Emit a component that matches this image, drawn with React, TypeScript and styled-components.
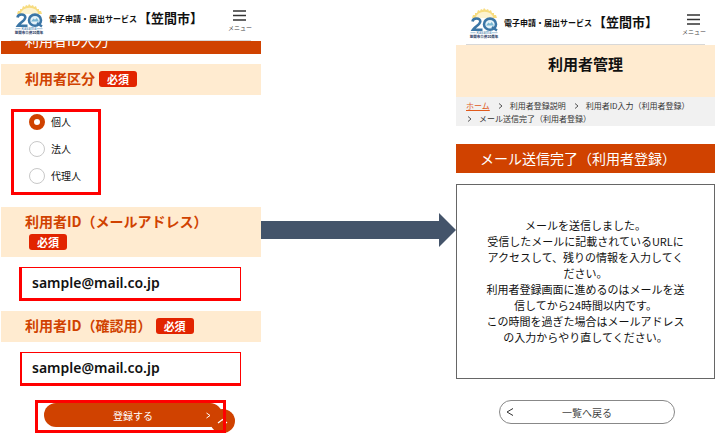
import React, { useState } from "react";
import styled, { createGlobalStyle } from "styled-components";

const ORANGE = "#d04200";
const CREAM = "#ffebd0";
const RED = "#ff0000";
const SLATE = "#44546a";

const GlobalStyle = createGlobalStyle`
  *, *::before, *::after { box-sizing: border-box; }
  body {
    margin: 0;
    background: #fff;
    color: #111;
    font-family: "Noto Sans CJK JP", "Noto Sans", sans-serif;
    font-size: 10px;
  }
  h1, h2, p, ol, fieldset { margin: 0; padding: 0; }
  button, input { font-family: inherit; }
`;

const Page = styled.main`
  display: grid;
  grid-template-columns: 260fr 195fr 259fr;
  align-items: start;
  padding: 0 1px;
`;

const Screen = styled.section`
  min-width: 0;
`;

const Header = styled.header<{ $top: number }>`
  display: flex;
  align-items: flex-start;
  padding: ${(p) => p.$top}px 9px 0 13px;
  height: ${(p) => p.$top + 37}px;
`;

const Brand = styled.div`
  display: flex;
  flex: 1;
  align-items: center;
  height: 32px;
  white-space: nowrap;
`;

const ServiceName = styled.span`
  margin-left: 5px;
  font-size: 8px;
  font-weight: 700;
  line-height: 32px;
`;

const CityName = styled.span`
  align-self: flex-start;
  margin-left: 1px;
  font-size: 13px;
  font-weight: 700;
  line-height: 30px;
`;

const MenuButton = styled.button`
  display: flex;
  flex-direction: column;
  align-items: center;
  gap: 2px;
  margin: 0;
  padding: 7px 0 0;
  border: 0;
  background: none;
  color: #444;
  font-size: 6px;
  line-height: 10px;
`;

const HeaderRule = styled.div`
  height: 1px;
  margin: 0 10px;
  background: #d8d8d8;
`;

const ClippedBar = styled.div`
  display: flex;
  align-items: flex-end;
  height: 13px;
  overflow: hidden;
  padding: 0 24px 6px;
  background: ${ORANGE};
  color: #fff;
  font-size: 14px;
  line-height: 16px;
`;

const FieldHeading = styled.div<{ $gap: number }>`
  display: flex;
  flex-wrap: wrap;
  align-items: center;
  margin-top: ${(p) => p.$gap}px;
  padding: 4px 24px 6px;
  background: ${CREAM};
  color: ${ORANGE};
  font-size: 14px;
  font-weight: 700;
  line-height: 21px;
`;

const Required = styled.span`
  margin: 2px 4px 1px;
  padding: 0 8px;
  border-radius: 3px;
  background: #e22400;
  color: #fff;
  font-size: 11px;
  line-height: 16px;
`;

const RadioGroup = styled.fieldset`
  display: flex;
  flex-direction: column;
  gap: 11px;
  width: 90px;
  margin: 14px 0 0 10px;
  padding: 2px 0 8px 15px;
  border: 3px solid ${RED};
`;

const RadioLabel = styled.label`
  display: flex;
  align-items: center;
  gap: 6px;
  height: 16px;
  font-size: 10px;
  line-height: 16px;
`;

const Radio = styled.input`
  appearance: none;
  width: 16px;
  height: 16px;
  margin: 0;
  border: 1px solid #c8c8c8;
  border-radius: 50%;
  background: #fff;
  &:checked { border: 5px solid ${ORANGE}; }
`;

const MailInput = styled.input<{ $edge: number }>`
  display: block;
  width: calc(100% - ${(p) => 41 - p.$edge}px);
  height: 34px;
  margin: 10px 0 0 ${(p) => 21 - p.$edge}px;
  padding: 0 0 2px 10px;
  border: 1px solid ${RED};
  border-width: 1px 1px 3px ${(p) => p.$edge}px;
  border-radius: 0;
  outline: 0;
  background: #fff;
  color: #111;
  font-family: "Noto Sans", sans-serif;
  font-size: 14px;
  font-weight: 600;
`;

const SubmitFrame = styled.div`
  position: relative;
  margin: 14px 35px 0 34px;
  padding: 3px 4px 6px 9px;
  &::after {
    content: "";
    position: absolute;
    inset: 0;
    border: 3px solid ${RED};
    pointer-events: none;
  }
`;

const SubmitButton = styled.button`
  display: flex;
  align-items: center;
  justify-content: center;
  width: 100%;
  height: 24px;
  padding: 0;
  border: 0;
  border-radius: 12px;
  background: ${ORANGE};
  color: #fff;
  font-size: 10px;
`;

const SubmitArrow = styled.svg`
  position: absolute;
  right: 15px;
  top: 12px;
`;

const ScrollTop = styled.button`
  position: absolute;
  right: -9px;
  bottom: 0;
  display: grid;
  place-items: center;
  width: 25px;
  height: 24px;
  padding: 0;
  border: 0;
  border-radius: 50%;
  background: ${ORANGE};
`;

const FlowArrow = styled.div`
  display: flex;
  align-items: center;
  margin-top: 213px;
`;

const Shaft = styled.div`
  flex: 1;
  height: 18px;
  background: ${SLATE};
`;

const PageTitle = styled.h1`
  height: 52px;
  padding-top: 7px;
  background: ${CREAM};
  font-size: 15px;
  font-weight: 700;
  line-height: 24px;
  text-align: center;
`;

const Crumbs = styled.ol`
  display: flex;
  flex-wrap: wrap;
  padding: 2px 10px 1px;
  background: #f1f1f1;
  color: #333;
  font-size: 8px;
  line-height: 13px;
  list-style: none;
  white-space: nowrap;
`;

const Crumb = styled.li`
  display: flex;
  align-items: center;
`;

const CrumbLink = styled.a`
  color: #e05a1c;
  text-decoration: underline;
`;

const Chevron = styled.svg`
  margin: 0 7px 0 8px;
  li:last-child > & { margin: 0 7px 0 1px; }
`;

const SectionBar = styled.h2`
  margin-top: 18px;
  padding: 0 24px;
  background: ${ORANGE};
  color: #fff;
  font-size: 14px;
  font-weight: 400;
  line-height: 29px;
`;

const Notice = styled.div`
  margin-top: 11px;
  padding: 32px 26px 33px;
  border: 1px solid #666;
  color: #111;
  font-size: 11px;
  line-height: 16px;
  text-align: center;
`;

const BackButton = styled.button`
  display: grid;
  grid-template-columns: 20px 1fr 20px;
  align-items: center;
  width: calc(100% - 83px);
  height: 24px;
  margin: 21px 40px 0 43px;
  padding: 0;
  border: 1px solid #888;
  border-radius: 12px;
  background: #fff;
  color: #444;
  font-size: 10px;
`;

const AnniversaryLogo = () => (
  <svg width="30" height="32" viewBox="0 0 30 32" role="img" aria-label="笠間市合併20周年">
    <path
      d="M3 11 L4 8 L6 8 L6 6 L8 6 L9 3 L11 4 L12 2 L14 3 L15 1 L17 3 L19 2 L20 4 L22 3 L23 6 L25 6 L25 8 L27 8 L28 11 Z"
      fill="#f7dc80"
    />
    <path d="M7 11 a8 6 0 0 1 17 0 Z" fill="#fdf3d0" />
    <path d="M3.5 14.5 C4 10.5 11.5 10.5 11.3 14.5 C11 18 6 19.5 4 22.7 H13.5" fill="none" stroke="#3b76a6" strokeWidth="2.6" />
    <ellipse cx="21" cy="17.2" rx="6" ry="5.6" fill="#e4f2f8" stroke="#3b76a6" strokeWidth="2.6" />
    <path d="M17 18.5 L19.5 15.5 L21 16.8 L22.8 15 L25 18.5 Z" fill="#79b6d2" />
    <path d="M23 20 L28 23.5" stroke="#3b76a6" strokeWidth="2.4" />
    <path d="M1.5 25.7 H6.5 M23 25.7 H28.5" stroke="#7da5c3" strokeWidth="0.7" />
    <text x="15" y="27" textAnchor="middle" fontSize="4" fill="#3b76a6">Kasama</text>
    <text x="15" y="31" textAnchor="middle" fontSize="3.5" fontWeight="700" fill="#18335c">笠間市合併20周年</text>
  </svg>
);

const SiteHeader = ({ top }: { top: number }) => (
  <>
    <Header $top={top}>
      <Brand>
        <AnniversaryLogo />
        <ServiceName>電子申請・届出サービス</ServiceName>
        <CityName>【笠間市】</CityName>
      </Brand>
      <MenuButton type="button">
        <svg width="13" height="11" viewBox="0 0 13 11" aria-hidden="true">
          <path d="M0 1H13M0 5.5H13M0 10H13" stroke="#333" strokeWidth="1.3" />
        </svg>
        メニュー
      </MenuButton>
    </Header>
    <HeaderRule />
  </>
);

const CrumbChevron = () => (
  <Chevron width="5" height="6" viewBox="0 0 5 6" aria-hidden="true">
    <path d="M1 .5 L4 3 L1 5.5" fill="none" stroke="#555" />
  </Chevron>
);

const kinds = ["個人", "法人", "代理人"];

export default function App() {
  const [kind, setKind] = useState(kinds[0]);
  const [mail, setMail] = useState("sample@mail.co.jp");
  const [confirm, setConfirm] = useState("sample@mail.co.jp");

  return (
    <>
      <GlobalStyle />
      <Page>
        <Screen>
          <SiteHeader top={3} />
          <ClippedBar>利用者ID入力</ClippedBar>
          <FieldHeading $gap={10} id="kind-label">
            利用者区分<Required>必須</Required>
          </FieldHeading>
          <RadioGroup aria-labelledby="kind-label">
            {kinds.map((k) => (
              <RadioLabel key={k}>
                <Radio type="radio" name="kind" checked={kind === k} onChange={() => setKind(k)} />
                {k}
              </RadioLabel>
            ))}
          </RadioGroup>
          <FieldHeading $gap={12}>
            <label htmlFor="mail">利用者ID（メールアドレス）</label>
            <Required>必須</Required>
          </FieldHeading>
          <MailInput $edge={3} id="mail" type="email" value={mail} onChange={(e) => setMail(e.target.value)} />
          <FieldHeading $gap={10}>
            <label htmlFor="confirm">利用者ID（確認用）</label>
            <Required>必須</Required>
          </FieldHeading>
          <MailInput $edge={2} id="confirm" type="email" value={confirm} onChange={(e) => setConfirm(e.target.value)} />
          <SubmitFrame>
            <SubmitButton type="submit">登録する</SubmitButton>
            <SubmitArrow width="5" height="7" viewBox="0 0 5 7" aria-hidden="true">
              <path d="M.5 1 L4 3.5 L.5 6" fill="none" stroke="#fff" />
            </SubmitArrow>
            <ScrollTop type="button" aria-label="ページの先頭へ">
              <svg width="11" height="6" viewBox="0 0 11 6" aria-hidden="true">
                <path d="M1 5 L5.5 1.5 L10 5" fill="none" stroke="#fff" strokeWidth="1.3" />
              </svg>
            </ScrollTop>
          </SubmitFrame>
        </Screen>

        <FlowArrow aria-hidden="true">
          <Shaft />
          <svg width="17" height="34" viewBox="0 0 17 34">
            <path d="M0 0 L17 17 L0 34 Z" fill={SLATE} />
          </svg>
        </FlowArrow>

        <Screen>
          <SiteHeader top={7} />
          <PageTitle>利用者管理</PageTitle>
          <nav>
            <Crumbs>
              <Crumb><CrumbLink href="#home">ホーム</CrumbLink></Crumb>
              <Crumb><CrumbChevron />利用者登録説明</Crumb>
              <Crumb><CrumbChevron />利用者ID入力（利用者登録）</Crumb>
              <Crumb><CrumbChevron />メール送信完了（利用者登録）</Crumb>
            </Crumbs>
          </nav>
          <SectionBar>メール送信完了（利用者登録）</SectionBar>
          <Notice>
            <p>メールを送信しました。</p>
            <p>受信したメールに記載されているURLにアクセスして、残りの情報を入力してください。</p>
            <p>利用者登録画面に進めるのはメールを送信してから24時間以内です。</p>
            <p>この時間を過ぎた場合はメールアドレスの入力からやり直してください。</p>
          </Notice>
          <BackButton type="button">
            <svg width="20" height="10" viewBox="0 0 20 10" aria-hidden="true">
              <path d="M13 1.5 L7 5 L13 8.5" fill="none" stroke="#333" />
            </svg>
            <span>一覧へ戻る</span>
          </BackButton>
        </Screen>
      </Page>
    </>
  );
}
